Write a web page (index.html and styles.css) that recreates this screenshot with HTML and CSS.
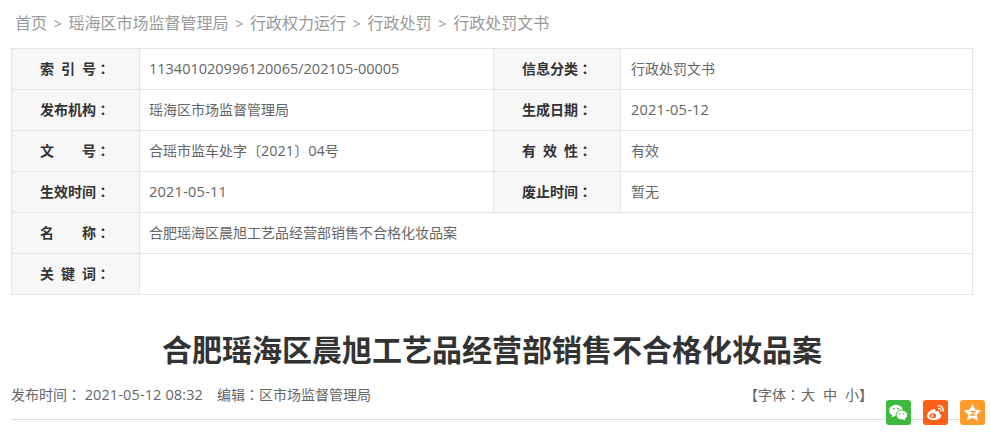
FILE: index.html
```html
<!DOCTYPE html>
<html lang="zh-CN">
<head>
<meta charset="utf-8">
<title>合肥瑶海区晨旭工艺品经营部销售不合格化妆品案</title>
<link rel="stylesheet" href="styles.css">
</head>
<body>
<div class="page">
  <nav class="crumbs"><a>首页</a><i>&gt;</i><a>瑶海区市场监督管理局</a><i>&gt;</i><a>行政权力运行</a><i>&gt;</i><a>行政处罚</a><i>&gt;</i><a>行政处罚文书</a></nav>
  <table class="info">
    <colgroup><col class="c1"><col class="c2"><col class="c3"><col class="c4"></colgroup>
    <tr><th>索 引 号<b lang="zh-TW">：</b></th><td class="num">113401020996120065/202105-00005</td><th>信息分类<b lang="zh-TW">：</b></th><td class="right">行政处罚文书</td></tr>
    <tr><th>发布机构<b lang="zh-TW">：</b></th><td>瑶海区市场监督管理局</td><th>生成日期<b lang="zh-TW">：</b></th><td class="num date right">2021-05-12</td></tr>
    <tr><th><span class="wide">文</span>号<b lang="zh-TW">：</b></th><td>合瑶市监车处字〔<span class="num">2021</span>〕<span class="num">04</span>号</td><th>有 效 性<b lang="zh-TW">：</b></th><td class="right">有效</td></tr>
    <tr><th>生效时间<b lang="zh-TW">：</b></th><td class="num date">2021-05-11</td><th>废止时间<b lang="zh-TW">：</b></th><td class="right">暂无</td></tr>
    <tr><th><span class="wide">名</span>称<b lang="zh-TW">：</b></th><td colspan="3">合肥瑶海区晨旭工艺品经营部销售不合格化妆品案</td></tr>
    <tr><th>关 键 词<b lang="zh-TW">：</b></th><td colspan="3"></td></tr>
  </table>
  <h1>合肥瑶海区晨旭工艺品经营部销售不合格化妆品案</h1>
  <div class="meta">
    <div>发布时间<b lang="zh-TW">：</b> <span class="num stamp">2021-05-12 08:32</span><span class="editor">编辑<b lang="zh-TW">：</b>区市场监督管理局</span></div>
    <div class="font-size">【字体<b lang="zh-TW">：</b>大<em>中</em>小】</div>
  </div>
  <div class="share">
    <span class="ico wechat"><svg viewBox="0 0 25 25" width="25" height="25"><ellipse cx="10" cy="10.500" rx="6.800" ry="5.800" fill="#fff"/><path d="M6.500 15l-1 2.600 3.400-1.600z" fill="#fff"/><ellipse cx="15.800" cy="15" rx="5.800" ry="4.900" fill="#fff" stroke="#3cb93e" stroke-width="1"/><path d="M18.500 18.500l1.200 2-3-1.200z" fill="#fff"/><circle cx="7.800" cy="8.600" r=".9" fill="#3cb93e"/><circle cx="12" cy="8.600" r=".9" fill="#3cb93e"/><circle cx="13.800" cy="13.800" r=".75" fill="#3cb93e"/><circle cx="17.800" cy="13.800" r=".75" fill="#3cb93e"/></svg></span>
    <span class="ico weibo"><svg viewBox="0 0 25 25" width="25" height="25"><path d="M10.500 20c-3.600 0-6.500-1.700-6.500-4 0-2.900 4.200-7 7-7 1.400 0 1.900 1 1.400 2.500 2-.8 3.800-.7 3.800.8 0 .4 0 .7-.2 1 1.500.4 2.300 1.300 2.300 2.400 0 2.300-3.500 4.300-7.800 4.300z" fill="#fff"/><ellipse cx="9.800" cy="15.800" rx="3.300" ry="2.500" fill="#fb5f1a"/><circle cx="9.300" cy="16" r="1.200" fill="#fff"/><path d="M15 5.800c3-.7 5.700 2 4.900 5.200M15.500 8.500c1.400-.3 2.700 1 2.300 2.500" fill="none" stroke="#fff" stroke-width="1.300" stroke-linecap="round"/></svg></span>
    <span class="ico qzone"><svg viewBox="0 0 25 25" width="25" height="25"><path d="M12.500 4l2.700 5.600 6.100.8-4.500 4.200 1.200 6.100-5.500-3-5.500 3 1.200-6.100-4.500-4.200 6.100-.8z" fill="#fff"/><path d="M10 11.500h5l-4.300 3.600h4.600" fill="none" stroke="#ff9a2b" stroke-width="1.200"/></svg></span>
  </div>
</div>
</body>
</html>
```
FILE: styles.css
```css
* { box-sizing: border-box; }
html, body { margin: 0; padding: 0; background: #fff; overflow: hidden; }
body {
  width: 990px;
  height: 439px;
  font-family: "Open Sans", "Noto Sans CJK SC", sans-serif;
  color: #666;
  font-size: 14px;
  text-spacing-trim: space-all;
}
.page { position: relative; width: 962px; margin-left: 11px; height: 439px; }
b { font-family: "Noto Sans CJK TC", sans-serif; }
.num { font-size: 14.5px; }
.date { letter-spacing: .25px; }
.stamp { letter-spacing: .12px; }
.crumbs {
  height: 48px;
  padding: 11px 0 0 4px;
  font-size: 16px;
  line-height: 24px;
  color: #999;
  white-space: nowrap;
}
.crumbs i { font-style: normal; margin: 0 6.75px; font-size: 14px; }
.info {
  width: 961px;
  border-collapse: collapse;
  table-layout: fixed;
}
.c1 { width: 128px; }
.c2 { width: 354px; }
.c3 { width: 127px; }
.c4 { width: 352px; }
.info th, .info td {
  height: 41px;
  border: 1px solid #e5e5e5;
  padding: 0 0 2px;
}
.info th {
  background: #f7f7f7;
  color: #333;
  font-size: 14px;
  font-weight: bold;
  text-align: left;
  padding-left: 28px;
  white-space: pre;
  word-spacing: 3.4px;
}
.info th b { font-weight: bold; }
.info td { padding-left: 9px; color: #666; }
.info td.right { padding-left: 10px; }
.wide { display: inline-block; width: 42px; }
h1 {
  margin: 0;
  padding-top: 34px;
  height: 76px;
  font-size: 30px;
  line-height: 42px;
  font-weight: bold;
  color: #333;
  text-align: center;
}
.meta {
  display: flex;
  justify-content: space-between;
  height: 49px;
  line-height: 20px;
  padding-top: 13px;
  border-bottom: 1px solid #ddd;
  white-space: nowrap;
}
.meta b { font-weight: normal; }
.editor { margin-left: 14px; }
.font-size { padding-right: 100px; }
.font-size b { margin-right: 1px; }
.font-size em { font-style: normal; margin: 0 8px; }
.share {
  position: absolute;
  left: 875px;
  top: 400px;
  display: flex;
  gap: 12px;
}
.ico { display: block; width: 25px; height: 25px; border-radius: 3px; }
.ico svg { display: block; }
.wechat { background: #3cb93e; }
.weibo { background: #fb5f1a; }
.qzone { background: #ff9a2b; }
```
